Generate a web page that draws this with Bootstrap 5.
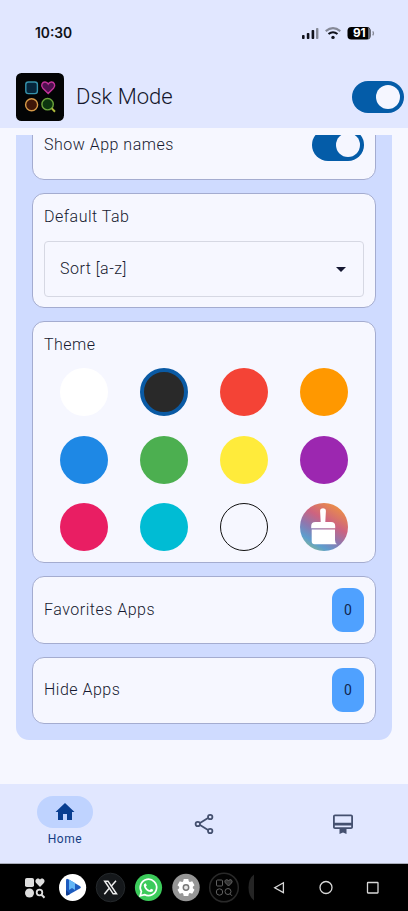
<!DOCTYPE html>
<html lang="en">
<head>
<meta charset="utf-8">
<meta name="viewport" content="width=device-width, initial-scale=1">
<title>Dsk Mode</title>
<link href="https://cdn.jsdelivr.net/npm/bootstrap@5.3.0/dist/css/bootstrap.min.css" rel="stylesheet">
<style>
body{font-family:Roboto,sans-serif;font-size:16px;font-weight:350;letter-spacing:.5px;line-height:24px;color:#161a30;background:#f6f7ff;width:408px;height:911px;overflow:hidden}
svg{display:block;flex:none}
.tint{background:#e1e7ff}
.status-bar{height:65px;padding:0 33.5px 0 35px}
.clock{font:600 13.8px/20px Inter,sans-serif;letter-spacing:0;color:#101218}
.app-bar{height:63px;padding:0 4px 0 16px}
.app-title{font-size:22px;line-height:28px;letter-spacing:0;color:#14172c}
.toggle{width:52px;height:32px;border-radius:16px;background:#045ca8;padding:4px}
.toggle-knob{width:24px;height:24px;border-radius:50%;background:#f5f6ff}
.main-area{height:656px;padding:7px 16px 44px}
.viewport{height:605px;border-radius:0 0 13px 13px;background:#cfdbff;overflow:hidden;padding:0 16px 16px}
.tile{border:1px solid #a4acd0;border-radius:12px;background:#f6f7ff;padding:0 11px;flex:none}
.stack{gap:13px}
.tile-names{height:70px}
.tile-tab{height:115px;padding-top:11px}
.tile-theme{height:242px;padding-top:11px}
.tile-count{height:67.5px}
.picker{height:56px;border:1px solid #d6d8e3;border-radius:4px;padding:0 17px 0 15px;margin-top:12px}
.caret{width:0;height:0;border:5px solid transparent;border-top-color:#151832;border-bottom:0}
.swatches{row-gap:19.7px;margin-top:11px}
.swatch{width:48px;height:48px;border-radius:50%}
.s-white{background:#fff}.s-dark{background:#292929;border:4.5px solid #0a5aa4}.s-red{background:#f44336}.s-orange{background:#ff9800}
.s-blue{background:#1e88e5}.s-green{background:#4caf50}.s-yellow{background:#ffeb3b}.s-purple{background:#9c27b0}
.s-pink{background:#e91e63}.s-cyan{background:#00bcd4}.s-clear{border:1.2px solid #111}
.count{width:32px;height:44px;border-radius:11px;background:#4fa1ff;color:#102650;font-size:14px;font-weight:400;letter-spacing:0}
.bottom-nav{height:80px;padding-top:12px;border-bottom:1px solid #a9adba}
.nav-slot{width:139px;flex:none}
.pill{width:56px;height:32px;border-radius:16px;background:#bfd3ff}
.nav-text{font-size:12px;line-height:16px;font-weight:400;letter-spacing:.6px;color:#173e83;margin-top:3px}
.taskbar{height:47px;background:#000}
</style>
<script src="https://cdn.jsdelivr.net/npm/bootstrap@5.3.0/dist/js/bootstrap.bundle.min.js"></script>
</head>
<body class="d-flex flex-column">
<header class="tint">
  <div class="status-bar d-flex align-items-center justify-content-between">
    <span class="clock">10:30</span>
    <svg width="73" height="14" viewBox="0 0 73 14">
      <g fill="#11131c"><rect x="0" y="9" width="2.6" height="4" rx=".8"/><rect x="4.8" y="7" width="2.6" height="6" rx=".8"/><rect x="9.6" y="4" width="2.6" height="9" rx=".8"/></g>
      <rect x="14" y="2" width="2.4" height="11" rx=".8" fill="#858997"/>
      <path d="M23.7 5.1q7.3-5.900 14.600 0" fill="none" stroke="#858997" stroke-width="2"/>
      <path d="M26.500 8q4.500-3.500 9 0" fill="none" stroke="#11131c" stroke-width="2.100"/>
      <circle cx="31" cy="11.400" r="1.700" fill="#11131c"/>
      <rect x="45.500" y="1" width="23" height="12.500" rx="3.800" fill="#000"/><path d="M66 1.300q2.700 1 2.700 3.500v5q0 2.500-2.700 3.500z" fill="#666a78"/>
      <path d="M70.700 5.300q1.500 2 0 4" stroke="#858997" stroke-width="1.300" fill="none"/>
      <text x="57.300" y="11.400" text-anchor="middle" font-family="Inter,sans-serif" font-size="11.800" font-weight="700" letter-spacing="-.2" fill="#fff">91</text>
    </svg>
  </div>
  <div class="app-bar d-flex align-items-center">
    <svg width="48" height="48" viewBox="0 0 48 48">
      <rect width="48" height="48" rx="5.500" fill="#030405"/>
      <g stroke-width="1.400">
        <rect x="9.800" y="9" width="11.600" height="11.600" rx="2.600" fill="#06263c" stroke="#3692ab"/>
        <path d="M32.200 20.500l-5.300-5.300c-2.700-2.900-.5-6.400 2.200-6.200 1.500.1 2.500.9 3.100 2 .6-1.100 1.600-1.900 3.100-2 2.700-.2 4.900 3.300 2.200 6.200z" fill="#501050" stroke="#c4329a"/>
        <circle cx="15.600" cy="31.800" r="6" fill="#3f1608" stroke="#d69a48"/>
        <circle cx="31.600" cy="31.200" r="5.700" fill="#0c350f" stroke="#6ca53c"/>
        <path d="M35.800 35.400l3.200 3.300" stroke="#b1bd3c" stroke-width="2"/>
      </g>
    </svg>
    <span class="app-title ms-2 ps-1 me-auto">Dsk Mode</span>
    <div class="toggle d-flex justify-content-end"><div class="toggle-knob"></div></div>
  </div>
</header>
<main class="main-area">
  <div class="viewport">
    <div class="stack h-100 d-flex flex-column justify-content-end">
      <div class="tile tile-names d-flex align-items-center justify-content-between"><span>Show App names</span><div class="toggle d-flex justify-content-end"><div class="toggle-knob"></div></div></div>
      <div class="tile tile-tab">
        <div>Default Tab</div>
        <div class="picker d-flex align-items-center justify-content-between"><span>Sort [a-z]</span><span class="caret"></span></div>
      </div>
      <div class="tile tile-theme">
        <div>Theme</div>
        <div class="swatches row row-cols-4 gx-0">
          <div class="d-flex justify-content-center"><div class="swatch s-white"></div></div>
          <div class="d-flex justify-content-center"><div class="swatch s-dark"></div></div>
          <div class="d-flex justify-content-center"><div class="swatch s-red"></div></div>
          <div class="d-flex justify-content-center"><div class="swatch s-orange"></div></div>
          <div class="d-flex justify-content-center"><div class="swatch s-blue"></div></div>
          <div class="d-flex justify-content-center"><div class="swatch s-green"></div></div>
          <div class="d-flex justify-content-center"><div class="swatch s-yellow"></div></div>
          <div class="d-flex justify-content-center"><div class="swatch s-purple"></div></div>
          <div class="d-flex justify-content-center"><div class="swatch s-pink"></div></div>
          <div class="d-flex justify-content-center"><div class="swatch s-cyan"></div></div>
          <div class="d-flex justify-content-center"><div class="swatch s-clear"></div></div>
          <div class="d-flex justify-content-center">
            <svg width="48" height="48" viewBox="0 0 48 48">
              <defs><linearGradient id="rainbow" x1=".8" y1="0" x2=".2" y2="1"><stop offset="0" stop-color="#f0953f"/><stop offset=".38" stop-color="#cd6380"/><stop offset=".62" stop-color="#8c78b0"/><stop offset=".82" stop-color="#5d9dce"/><stop offset="1" stop-color="#86bb91"/></linearGradient></defs>
              <circle cx="24" cy="24" r="24" fill="url(#rainbow)"/>
              <path d="M20.700 19l-.6-11q0-2.800 2.900-2.800t2.900 2.800L25.300 19h5.700q4.200 0 4.200 4v2.300H11.200V23q0-4 4.200-4zM11.700 26.500h23.300V37q0 3.200 2 4.300H14.700q-3 0-3-3z" fill="#fff"/>
            </svg>
          </div>
        </div>
      </div>
      <div class="tile tile-count d-flex align-items-center justify-content-between"><span>Favorites Apps</span><span class="count d-flex align-items-center justify-content-center">0</span></div>
      <div class="tile tile-count d-flex align-items-center justify-content-between"><span>Hide Apps</span><span class="count d-flex align-items-center justify-content-center">0</span></div>
    </div>
  </div>
</main>
<nav class="bottom-nav tint d-flex justify-content-center">
  <div class="nav-slot d-flex flex-column align-items-center">
    <div class="pill d-flex align-items-center justify-content-center"><svg width="24" height="24" viewBox="0 0 24 24" fill="#083e91"><path d="M10 20v-6h4v6h5v-8h2.500L12 3 2.500 12H5v8z"/></svg></div>
    <span class="nav-text">Home</span>
  </div>
  <div class="nav-slot d-flex justify-content-center pt-3">
    <svg width="24" height="24" viewBox="0 0 24 24" fill="none" stroke="#44506f" stroke-width="1.800"><path d="M8 11l8-5M8 13l8 5"/><circle cx="5.800" cy="12" r="2.200"/><circle cx="18.200" cy="5" r="2.200"/><circle cx="18.200" cy="19" r="2.200"/></svg>
  </div>
  <div class="nav-slot d-flex justify-content-center pt-3">
    <svg width="24" height="24" viewBox="0 0 24 24" fill="#44506f"><path d="M20 2.500H4c-1.110 0-2 .890-2 2V15c0 1.110.890 2 2 2h4.500v5l3.500-1.600 3.500 1.600v-5H20c1.110 0 2-.890 2-2V4.500c0-1.110-.890-2-2-2zm.2 12.800H3.800v-1.800h16.400v1.800zm0-4.500H3.800V4.300h16.400v6.500z"/></svg>
  </div>
</nav>
<footer class="taskbar">
  <svg width="408" height="47" viewBox="0 0 408 47">
    <g fill="#dedede">
      <rect x="25" y="14" width="9" height="9" rx="1.800"/><circle cx="29.500" cy="29" r="4.500"/>
      <path d="M40 23l-3.600-3.700c-2-2.200-.5-4.900 1.600-4.900.9 0 1.600.5 2 1.200.4-.7 1.100-1.200 2-1.200 2.100 0 3.600 2.700 1.600 4.900z"/>
      <circle cx="39.500" cy="28.500" r="2.800" fill="none" stroke="#dedede" stroke-width="1.800"/><path d="M41.300 30.500l3.200 3.300" stroke="#dedede" stroke-width="2"/>
    </g>
    <circle cx="72.600" cy="23.500" r="13.600" fill="#fff"/>
    <path d="M66 16.500q0-2.500 2.300-1.200l11.500 6.700q2 1.300 0 2.600l-11.500 6.500Q66 32.300 66 30z" fill="#1c5bbf"/><path d="M69 15.500l6 3.600v7l-3-2-3 2z" fill="#62b5f5"/><path d="M66 30v-4l4 4.100-1.700 1Q66 32.300 66 30z" fill="#123d8f"/>
    <circle cx="110.500" cy="23.500" r="14.300" fill="#15181b" stroke="#24282b"/>
    <g fill="none" stroke="#eee"><path d="M104.700 17.200h3.300l8.500 12.600h-3.300z" stroke-width="1.500"/><path d="M116 16.800l-5 5.700M109 24.600l-4.700 5.600" stroke-width="1.500"/></g>
    <circle cx="148.500" cy="23.500" r="13.600" fill="#3ccb5b"/>
    <path d="M140.200 31.800l1.200-4.200a8.200 8.200 0 1 1 3.100 3z" fill="none" stroke="#fff" stroke-width="1.700"/>
    <path d="M145.800 19.200l1 2.200-1 1.300q1.400 2.500 3.900 3.500l1.300-1.500 2.300 1.100q-.2 2.200-2.600 2.200-5.800-.8-7-6.600 0-1.800 2.100-2.200z" fill="#fff"/>
    <circle cx="186" cy="23.500" r="13.700" fill="#969696"/>
    <g fill="#fff"><circle cx="186" cy="23.500" r="6.800"/><g id="teeth"><path d="M183.700 15h4.600l.8 4h-6.200zM183.700 32h4.600l.8-4h-6.200z"/></g><use href="#teeth" transform="rotate(60 186 23.500)"/><use href="#teeth" transform="rotate(120 186 23.500)"/></g>
    <circle cx="186" cy="23.500" r="2.700" fill="#e8e8e8" stroke="#777" stroke-width="1.500"/>
    <circle cx="224" cy="23.500" r="14.300" fill="#030303" stroke="#292929" stroke-width="1.500"/>
    <g fill="none" stroke="#626262" stroke-width="1"><rect x="216.500" y="16" width="6" height="6" rx="1"/><circle cx="219.500" cy="28" r="3.200"/><path d="M228.500 22l-3-3c-1.500-1.800 0-3.600 1.500-3.300.7.100 1.200.6 1.500 1.200.3-.6.8-1.100 1.500-1.200 1.500-.3 3 1.500 1.500 3.300z" fill="#333"/><circle cx="228" cy="27.500" r="3"/><path d="M230 29.800l2 2"/></g>
    <path d="M254 10.500q-5.500 4-5.500 13t5.500 13z" fill="#252525"/>
    <g fill="none" stroke="#d8d8d8" stroke-width="1.300"><path d="M283.400 18.800v9.800l-8.700-4.900z"/><circle cx="326" cy="23.500" r="6"/><rect x="367.500" y="18.500" width="10.500" height="10.500" rx=".5"/></g>
  </svg>
</footer>
</body>
</html>
